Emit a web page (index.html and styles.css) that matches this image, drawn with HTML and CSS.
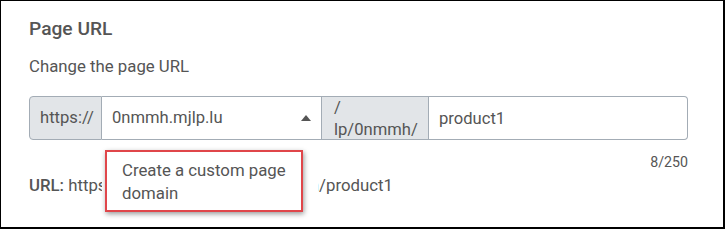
FILE: index.html
```html
<!DOCTYPE html>
<html lang="en">
<head>
    <meta charset="UTF-8">
    <meta name="viewport" content="width=device-width, initial-scale=1.0">
    <title>Page URL</title>
    <link rel="stylesheet" href="styles.css">
</head>
<body>
    <div class="frame">
        <div class="section">
            <h2 class="title">Page URL</h2>
            <p class="desc">Change the page URL</p>

            <!-- grupo de campos de la url -->
            <div class="url-group">
                <span class="addon prefix">https://</span>
                <div class="domain-select">
                    <span class="domain-value">0nmmh.mjlp.lu</span>
                    <span class="caret"></span>
                    <div class="domain-menu">
                        <div class="menu-option">Create a custom page domain</div>
                    </div>
                </div>
                <span class="addon path">/ lp/0nmmh/</span>
                <input class="slug" type="text" value="product1">
            </div>
            <div class="counter">8/250</div>

            <p class="url-line"><b>URL:</b> https://0nmmh.mjlp.lu/lp/0nmmh/product1</p>
            <div class="divider"></div>
        </div>
    </div>
</body>
</html>
```

FILE: styles.css
```css
body {
    margin: 0;
    font-family: Roboto, "Liberation Sans", sans-serif;
    color: #555;
    background: #fff;
}

.frame {
    height: 229px;
    box-sizing: border-box;
    border: 1px solid #000;
    border-right-width: 2px;
    border-bottom-width: 2px;
    overflow: hidden;
}

.section {
    padding: 16px 35px 0 28px;
}

.title {
    margin: 0;
    font-size: 19.2px;
    line-height: 24px;
    font-weight: 500;
    color: #555;
}

.desc {
    margin: 15px 0 0;
    font-size: 16.8px;
    line-height: 20px;
}

.url-group {
    display: flex;
    height: 44px;
    margin-top: 20px;
    font-size: 16.6px;
}

.addon {
    box-sizing: border-box;
    background: #e2e5e8;
    border: 1px solid #a3acb5;
    color: #555;
}

.prefix {
    width: 73px;
    padding-left: 10px;
    line-height: 42px;
    border-radius: 4px 0 0 4px;
}

.domain-select {
    position: relative;
    width: 219px;
    box-sizing: border-box;
    border-top: 1px solid #a3acb5;
    border-bottom: 1px solid #a3acb5;
    padding-left: 10px;
    line-height: 42px;
}

.caret {
    position: absolute;
    right: 10px;
    top: 18px;
    width: 0;
    height: 0;
    border-left: 5px solid transparent;
    border-right: 5px solid transparent;
    border-bottom: 6px solid #555;
}

/* menú desplegable del dominio */
.domain-menu {
    position: absolute;
    top: 43px;
    left: 0;
    width: 216px;
    box-sizing: border-box;
    padding: 10px 10px 9px 3px;
    background: #fff;
    line-height: normal;
    z-index: 2;
}

.menu-option {
    width: 198px;
    box-sizing: border-box;
    padding: 7px 12px 5px 15px;
    border: 2px solid #e0464a;
    box-shadow: 1px 2px 5px rgba(0, 0, 0, 0.4);
    font-size: 16.8px;
    line-height: 23px;
    color: #555;
}

.path {
    width: 108px;
    padding: 0 12px;
    line-height: 22px;
    overflow: hidden;
    word-spacing: 100px;
}

.slug {
    flex: 1;
    min-width: 0;
    box-sizing: border-box;
    height: 44px;
    margin: 0;
    border: 1px solid #a3acb5;
    border-left: none;
    border-radius: 0 4px 4px 0;
    padding: 0 10px;
    font-family: inherit;
    font-size: 16.6px;
    color: #555;
    outline: none;
}

.counter {
    margin-top: 14px;
    text-align: right;
    font-size: 14.2px;
    line-height: 16px;
}

.url-line {
    margin: 4px 0 0;
    font-size: 16.8px;
    line-height: 22px;
    white-space: nowrap;
}

.url-line b {
    font-weight: 500;
}

.divider {
    margin-top: 32px;
    margin-right: -35px;
    border-top: 1px solid #dcdcdc;
}
```
